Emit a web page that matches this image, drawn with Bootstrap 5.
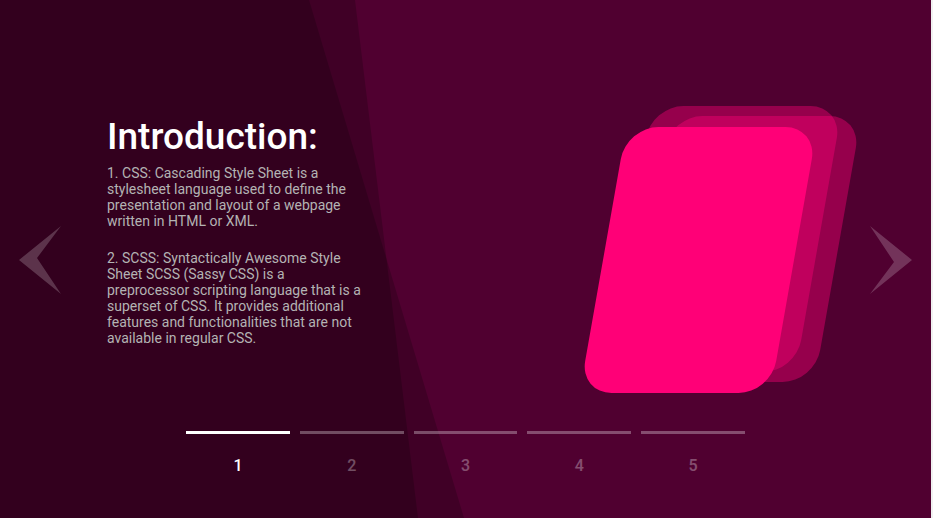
<!DOCTYPE html>
<html lang="en">
<head>
<meta charset="utf-8">
<meta name="viewport" content="width=device-width, initial-scale=1">
<title>Introduction</title>
<link href="https://cdn.jsdelivr.net/npm/bootstrap@5.3.0/dist/css/bootstrap.min.css" rel="stylesheet">
<style>
  body { font-family: Roboto, sans-serif; background: #f1f1f1; }
  .stage { background: #500030; margin-right: 2px; }
  .backdrop { inset: 0; }
  .layer { position: relative; }
  .slide { padding: 89px 19px 0; }
  .arrow { color: #fff; opacity: .2; line-height: 0; }
  .arrow svg { width: 42px; height: 68px; }
  .copy { width: 256px; margin-left: 46px; padding-top: 26px; font-size: 14px; line-height: 16px; color: #b3b3b3; }
  .copy h1 { font-size: 37px; line-height: 44px; font-weight: 500; color: #fff; margin-bottom: 6px; }
  .copy p { margin-bottom: 21px; }
  .art { width: 191px; height: 266px; margin-right: 76px; }
  .sheet { inset: 0; border-radius: 32px; background: #ff0077; transform: skewX(-10deg); }
  .sheet-back { left: 25px; right: -25px; top: -21px; bottom: 21px; opacity: .4; }
  .sheet-mid { left: 44px; right: -44px; top: -11px; bottom: 11px; opacity: .4; }
  .steps { width: 60%; gap: 10px; height: 87px; }
  .step { flex: 1 1 0; color: #fff; opacity: .3; border-top: 3px solid #fff !important; padding-top: 22px; font-size: 16px; line-height: 20px; font-weight: 500; }
  .step.active { opacity: 1; }
</style>
<script src="https://cdn.jsdelivr.net/npm/bootstrap@5.3.0/dist/js/bootstrap.bundle.min.js"></script>
</head>
<body>
<main class="stage position-relative min-vh-100 d-flex flex-column overflow-hidden">
  <svg class="backdrop position-absolute w-100 h-100" viewBox="0 0 931 518" preserveAspectRatio="none" aria-hidden="true">
    <g fill="#000" fill-opacity=".2">
      <path d="M0 0H309L464 518H0Z"/>
      <path d="M0 0H355L418 518H0Z"/>
    </g>
  </svg>
  <section class="slide layer flex-fill d-flex align-items-center">
    <button type="button" class="arrow border-0 bg-transparent p-0" aria-label="Previous">
      <svg viewBox="0 0 42 68" fill="currentColor"><path d="M0 34L42 0L18 32L42 68Z"/></svg>
    </button>
    <div class="copy align-self-start">
      <h1>Introduction:</h1>
      <p>1. CSS: Cascading Style Sheet is a stylesheet language used to define the presentation and layout of a webpage written in HTML or XML.</p>
      <p class="mb-0">2. SCSS: Syntactically Awesome Style Sheet SCSS (Sassy CSS) is a preprocessor scripting language that is a superset of CSS. It provides additional features and functionalities that are not available in regular CSS.</p>
    </div>
    <div class="art position-relative ms-auto" aria-hidden="true">
      <div class="sheet sheet-back position-absolute"></div>
      <div class="sheet sheet-mid position-absolute"></div>
      <div class="sheet position-absolute"></div>
    </div>
    <button type="button" class="arrow border-0 bg-transparent p-0" aria-label="Next">
      <svg viewBox="0 0 42 68" fill="currentColor"><path d="M42 34L0 0L24 36L0 68Z"/></svg>
    </button>
  </section>
  <nav class="steps layer d-flex align-items-start mx-auto" aria-label="Slides">
    <button type="button" class="step active border-0 bg-transparent px-0 pb-0" aria-current="true">1</button>
    <button type="button" class="step border-0 bg-transparent px-0 pb-0">2</button>
    <button type="button" class="step border-0 bg-transparent px-0 pb-0">3</button>
    <button type="button" class="step border-0 bg-transparent px-0 pb-0">4</button>
    <button type="button" class="step border-0 bg-transparent px-0 pb-0">5</button>
  </nav>
</main>
</body>
</html>
